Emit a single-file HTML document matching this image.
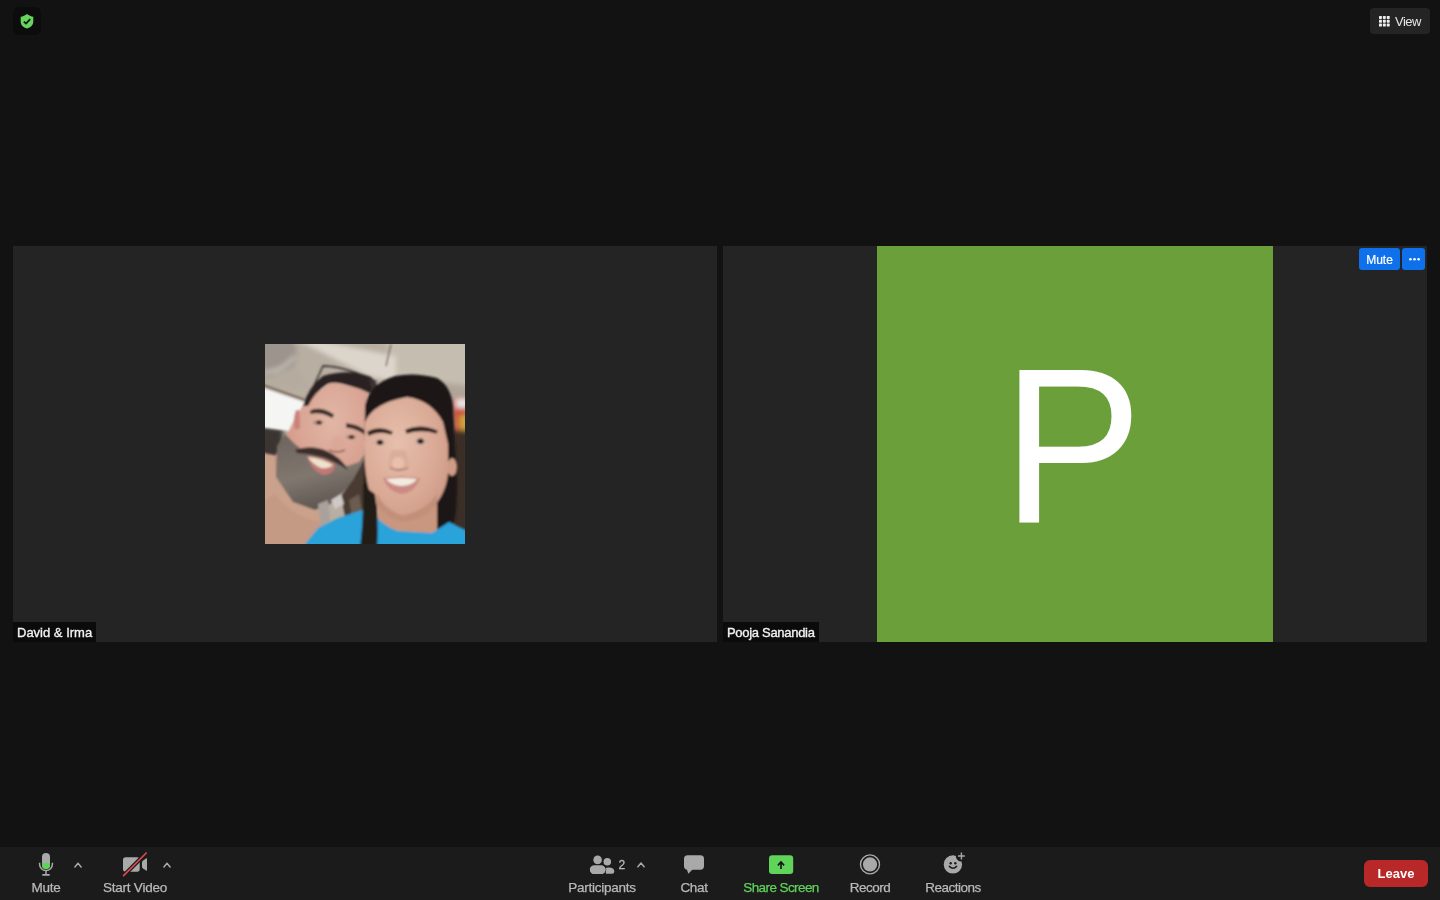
<!DOCTYPE html>
<html><head><meta charset="utf-8">
<style>
*{margin:0;padding:0;box-sizing:border-box}
html,body{width:1440px;height:900px;overflow:hidden;background:#121212;font-family:"Liberation Sans",sans-serif}
.abs{position:absolute}
#shield{left:13px;top:7px;width:28px;height:28px;border-radius:6px;background:#0b0c0b}
#view{left:1370px;top:8px;width:60px;height:26px;border-radius:4px;background:#242424;color:#e6e6e6;font-size:13px}
.tile{top:246px;width:704px;height:396px;background:#242424}
#t1{left:13px}
#t2{left:723px}
.lbl{position:absolute;left:0;bottom:0;height:20px;background:#0b0b0b;font-size:13px;white-space:nowrap}
.lbl span{position:absolute;left:4px;top:3px;line-height:16px;color:#f2f2f2;-webkit-text-stroke:0.35px #f2f2f2;will-change:transform}
#photo{left:252px;top:98px;width:200px;height:200px;overflow:hidden}
#avatar{left:154px;top:0;width:396px;height:396px;background:#6a9f3a;color:#fff;font-size:221px;line-height:396px;text-align:center}
#avatar span{display:inline-block;transform:translate(-2.5px,1.5px) scaleX(0.95)}
.bbtn{position:absolute;top:2px;height:22px;border-radius:3px;background:#0e71eb;color:#fff;font-size:12px}
#toolbar{left:0;top:847px;width:1440px;height:53px;background:#1b1b1b}
.tl{position:absolute;top:32.6px;width:120px;text-align:center;font-size:13.5px;will-change:transform;color:#b9b9b9;-webkit-text-stroke:0.25px currentColor;white-space:nowrap;line-height:16px}
#leave{left:1364px;top:13px;width:64px;height:27px;border-radius:6px;background:#b82828;color:#fff;font-weight:bold;font-size:13px;line-height:28px;text-align:center;will-change:transform}
</style></head><body>

<div id="shield" class="abs">
<svg width="28" height="28" viewBox="0 0 28 28" style="position:absolute;left:0;top:0">
<path d="M14 7 C12 8.6 10 9.4 7.7 9.8 L7.7 14.5 C7.7 18.2 10.3 20.5 14 21.4 C17.7 20.5 20.3 18.2 20.3 14.5 L20.3 9.8 C18 9.4 16 8.6 14 7 Z" fill="#64d65c"/>
<path d="M10.8 14.6 L13 16.6 L17.2 12.2" fill="none" stroke="#0b0c0b" stroke-width="1.7"/>
</svg>
</div>

<div id="view" class="abs">
<svg width="12" height="11" viewBox="0 0 12 11" style="position:absolute;left:8.5px;top:8.3px">
<g fill="#f0f0f0"><rect x="0.0" y="0.0" width="2.9" height="2.9" rx="0.6"/><rect x="3.9" y="0.0" width="2.9" height="2.9" rx="0.6"/><rect x="7.8" y="0.0" width="2.9" height="2.9" rx="0.6"/><rect x="0.0" y="3.8" width="2.9" height="2.9" rx="0.6"/><rect x="3.9" y="3.8" width="2.9" height="2.9" rx="0.6"/><rect x="7.8" y="3.8" width="2.9" height="2.9" rx="0.6"/><rect x="0.0" y="7.6" width="2.9" height="2.9" rx="0.6"/><rect x="3.9" y="7.6" width="2.9" height="2.9" rx="0.6"/><rect x="7.8" y="7.6" width="2.9" height="2.9" rx="0.6"/></g>
</svg>
<span style="position:absolute;left:25px;top:6px;line-height:16px;letter-spacing:-0.5px;will-change:transform">View</span>
</div>

<div id="t1" class="abs tile">
  <div id="photo" class="abs">
<svg width="200" height="200" viewBox="0 0 200 200" style="position:absolute;left:0;top:0">
<defs>
<filter id="bl" x="-10%" y="-10%" width="120%" height="120%"><feGaussianBlur stdDeviation="1.1"/></filter>
<filter id="bl2" x="-20%" y="-20%" width="140%" height="140%"><feGaussianBlur stdDeviation="2.5"/></filter>
<filter id="bl3" x="-20%" y="-20%" width="140%" height="140%"><feGaussianBlur stdDeviation="4"/></filter>
<radialGradient id="mface" cx="0.62" cy="0.3" r="0.75"><stop offset="0" stop-color="#e2b6a6"/><stop offset="0.55" stop-color="#d8a291"/><stop offset="1" stop-color="#c98a80"/></radialGradient>
<radialGradient id="wface" cx="0.4" cy="0.38" r="0.75"><stop offset="0" stop-color="#e6bfac"/><stop offset="0.65" stop-color="#d9a894"/><stop offset="1" stop-color="#c99682"/></radialGradient>
<linearGradient id="beard" x1="0" y1="0" x2="0.3" y2="1"><stop offset="0" stop-color="#6e635e"/><stop offset="0.6" stop-color="#80776f"/><stop offset="1" stop-color="#615852"/></linearGradient>
<clipPath id="pc"><rect width="200" height="200"/></clipPath>
</defs>
<g clip-path="url(#pc)">
<rect width="200" height="200" fill="#b8aea2"/>
<g filter="url(#bl2)">
<!-- fan -->
<circle cx="8" cy="10" r="24" fill="#9d958d"/>
<path d="M-5 28 Q15 30 30 12" stroke="#d8d2ca" stroke-width="2" fill="none"/>
<path d="M-5 36 L30 22 L46 45 L-5 42 Z" fill="#b5ab9f"/>
<path d="M120 -5 L205 -5 L205 55 L130 36 Z" fill="#c6bdb1"/>
<path d="M150 35 L205 42 L205 72 L180 62 Z" fill="#afa599"/>
<path d="M30 -5 L48 -5 L131 12 L131 38 L105 33 Z" fill="#dcd5cb"/>
<path d="M-5 82 L18 84 L18 114 L-5 114 Z" fill="#3a3632"/>

<path d="M186 55 L205 52 L205 86 L189 86 Z" fill="#c9503a"/>
<path d="M190 55 L205 54 L205 64 L191 64 Z" fill="#e8e4e4"/>
<path d="M194 72 L205 70 L205 94 L195 94 Z" fill="#cfa23e"/>
<path d="M186 86 L205 86 L205 205 L186 205 Z" fill="#3b2f27"/>
</g>
<g filter="url(#bl)">
<path d="M-5 43 L39 58 L38 89 L-5 83 Z" fill="#f5f5f4"/>
<path d="M-5 40 L40 56" stroke="#7a695c" stroke-width="2.2"/>
<path d="M126 0 L121 22" stroke="#4a3f38" stroke-width="0.9"/>
<!-- man shoulder/neck -->
<path d="M-5 108 L12 112 L22 140 L40 160 L56 168 L66 205 L-5 205 Z" fill="#caa18b"/>
<path d="M10 150 Q30 175 56 178 L60 205 L-5 205 L-5 160 Z" fill="#c49a85"/>
<!-- man face -->
<path d="M40 57 L28 78 L17 100 L10 112 L11 133 L28 158 L50 165 L67 158 L83 142 L98 128 L102 100 L102 46 L67 38 L44 54 Z" fill="url(#mface)"/>
<path d="M31 66 Q27 76 30 86 L35 84 Q35 74 34 66 Z" fill="#c9837b"/>
<!-- beard -->
<path d="M20 90 L12 102 L11 133 L28 158 L50 166 L67 159 L83 143 L99 128 L101 108 L94 118 L82 122 L70 117 L55 112 L40 108 L30 100 Z" fill="url(#beard)"/>
<!-- woman hair strands between -->
<path d="M101 112 L108 130 L110 172 L96 180 L80 172 L76 152 L88 136 Z" fill="#4a3a30"/>
<path d="M84 156 L94 150 L98 172 L88 178 Z" fill="#6b5b50"/>
<!-- strap -->
<path d="M53 160 L63 156 L66 185 L57 190 Z" fill="#a9a29c"/>
<path d="M66 156 L76 150 L79 160 L70 165 Z" fill="#cfc9c6"/>
<!-- mouth -->
<path d="M42 112 Q56 112 70 120 Q70 130 58 131 Q46 126 42 112 Z" fill="#c47874"/>
<path d="M43 113 Q56 114 68 121 Q63 125 56 124 Q47 120 43 113 Z" fill="#ece3cc"/>
<path d="M30 106 Q46 100 62 107 Q76 113 83 126 Q72 119 60 114 Q46 110 32 109 Z" fill="#3a2e2a"/>
<!-- nose -->
<ellipse cx="73" cy="99" rx="7" ry="7" fill="#dba595" opacity="0.6"/>
<path d="M64 106 Q72 110 80 106" stroke="#8c5a50" stroke-width="1.5" fill="none"/>
<!-- man hair -->
<path d="M38 62 Q44 42 58 32 Q84 24 106 33 L113 42 L104 49 Q94 44 82 41 Q70 37 62 40 Q50 48 43 62 Z" fill="#2b2421"/>
<!-- glasses -->
<path d="M43 55 L58 22 Q80 22 112 38" stroke="#2a2624" stroke-width="1.3" fill="none"/>
<path d="M104 35 Q112 38 116 48 L108 50 Z" fill="#3a3330"/>
<!-- man brows/eyes -->
<path d="M46 67 Q56 63 68 71 L67 73 Q56 67 46 69 Z" stroke="#3a2d28" stroke-width="1.6" fill="#3a2d28"/>
<path d="M82 80 Q93 81 101 88 L100 90 Q92 84 82 83 Z" stroke="#3a2d28" stroke-width="1.6" fill="#3a2d28"/>
<ellipse cx="53" cy="78.5" rx="5.5" ry="2.3" fill="#b89488"/><ellipse cx="54" cy="78.5" rx="2.8" ry="2" fill="#3a2822"/>
<ellipse cx="86" cy="93" rx="5.5" ry="2.3" fill="#b89488"/><ellipse cx="86.5" cy="93" rx="2.8" ry="2" fill="#3a2822"/>
<!-- woman hair -->
<path d="M100 62 Q104 40 130 32 Q150 28 172 34 Q186 42 188 62 L192 130 Q193 175 186 192 L168 192 L168 140 L112 140 L112 205 L100 205 L99 140 Z" fill="#1e1816"/>
<!-- woman face -->
<path d="M100 78 Q108 59 142 53 Q166 56 178 78 L183 100 L183 130 Q180 155 162 168 Q146 176 131 174 Q112 168 105 150 Q99 130 99 100 Z" fill="url(#wface)"/>
<ellipse cx="187" cy="123" rx="5" ry="9" fill="#cf9c86"/>
<!-- woman brows/eyes -->
<path d="M103 88 Q114 82 127 88 L126 90 Q114 86 104 91 Z" stroke="#2e221e" stroke-width="1.3" fill="#2e221e"/>
<path d="M141 86 Q156 80 172 87 L171 89 Q156 84 142 89 Z" stroke="#2e221e" stroke-width="1.3" fill="#2e221e"/>
<ellipse cx="114.5" cy="98.5" rx="6.5" ry="2.8" fill="#c9b0a6"/><ellipse cx="115" cy="98.3" rx="3.2" ry="2.6" fill="#2e1e1a"/>
<ellipse cx="156" cy="97.4" rx="6.5" ry="2.8" fill="#c9b0a6"/><ellipse cx="155.5" cy="97.2" rx="3.2" ry="2.6" fill="#2e1e1a"/>
<path d="M126 106 Q122 120 124 124 Q134 128 144 124 Q146 118 140 106 Z" fill="#dcae9a"/>
<ellipse cx="133" cy="119" rx="6" ry="6" fill="#e8c0ad"/>
<path d="M125 124 Q134 128 143 124" stroke="#9a6a5c" stroke-width="1.3" fill="none"/>
<!-- woman mouth -->
<path d="M118 134 Q137 131 155 134 Q150 149 136 150 Q122 147 118 134 Z" fill="#cc8a84"/>
<path d="M121 135 Q137 133 152 135 Q147 142 136 142 Q126 141 121 135 Z" fill="#f2ebe0"/>
<!-- neck -->
<path d="M112 150 Q120 166 137 171 Q160 168 172 150 L172 192 L114 192 Z" fill="#c9977f"/>
<path d="M112 150 Q120 166 137 172 Q160 168 172 150 L172 160 Q160 176 137 178 Q120 174 112 160 Z" fill="#c28f7a"/>
<!-- blue shirt -->
<path d="M36 205 L53 184 Q75 172 98 166 L108 169 Q118 182 133 187 L167 189 L184 178 L205 188 L205 205 Z" fill="#29a2da"/>
<path d="M98 140 Q104 146 110 150 Q114 175 112 205 L95 205 Q99 170 98 140 Z" fill="#221a17"/>
</g>
</g>
</svg>
  </div>
  <div class="lbl" style="width:83px"><span>David &amp; Irma</span></div>
</div>

<div id="t2" class="abs tile">
  <div id="avatar" class="abs"><span>P</span></div>
  <div class="bbtn" style="left:636px;width:41px"><span style="position:absolute;left:0;width:41px;text-align:center;top:3.5px;line-height:16px;-webkit-text-stroke:0.2px #fff;will-change:transform">Mute</span></div>
  <div class="bbtn" style="left:679px;width:23px"><svg width="23" height="22" style="position:absolute;left:0;top:0"><circle cx="8.4" cy="11.3" r="1.3" fill="#fff"/><circle cx="12.5" cy="11.3" r="1.3" fill="#fff"/><circle cx="16.6" cy="11.3" r="1.3" fill="#fff"/></svg></div>
  <div class="lbl" style="width:96px"><span style="letter-spacing:-0.3px">Pooja Sanandia</span></div>
</div>

<div id="toolbar" class="abs">
<svg class="abs" style="left:0;top:0" width="1440" height="53" viewBox="0 847 1440 53">
<defs>
<clipPath id="micclip"><rect x="42" y="853" width="8" height="16" rx="4"/></clipPath>
<mask id="facemask"><rect x="930" y="847" width="50" height="40" fill="#fff"/><circle cx="961.4" cy="856" r="5.6" fill="#000"/></mask>
</defs>
<g fill="#a9a9a9">
<!-- mic -->
<rect x="42" y="853" width="8" height="16" rx="4"/>
<rect x="40" y="863" width="12" height="8" fill="#5dd35a" clip-path="url(#micclip)"/>
<path d="M39.6 862.8 L39.6 864.2 A6.4 6.4 0 0 0 52.4 864.2 L52.4 862.8" fill="none" stroke="#a9a9a9" stroke-width="1.5"/>
<rect x="45.25" y="870.5" width="1.5" height="4"/>
<rect x="42.2" y="874" width="7.6" height="1.7" rx="0.4"/>
</g>
<g fill="none" stroke="#a9a9a9" stroke-width="1.5" stroke-linecap="round" stroke-linejoin="round">
<path d="M74.9 867 L78 863.2 L81.1 867"/>
<path d="M163.9 867 L167 863.2 L170.1 867"/>
<path d="M637.9 866.8 L641 863 L644.1 866.8"/>
</g>
<!-- video -->
<g fill="#a9a9a9">
<rect x="123" y="857.2" width="16.7" height="14.5" rx="2.6"/>
<path d="M142 862.2 Q142 861.4 142.8 860.8 L146 858.4 Q147 857.8 147 859 L147 870 Q147 871.2 146 870.6 L142.8 868.2 Q142 867.6 142 866.8 Z"/>
</g>
<path d="M123.6 875.6 L146.2 853" stroke="#1b1b1b" stroke-width="4" stroke-linecap="round"/>
<path d="M123.6 875.6 L146.2 853" stroke="#d9494c" stroke-width="1.7" stroke-linecap="round"/>
<!-- participants -->
<g fill="#a9a9a9">
<circle cx="607.3" cy="861.7" r="3.8"/>
<path d="M606 873.8 L612 873.8 Q614.3 873.8 614.3 871.8 Q614.3 867.6 608.8 867.6 Q606 867.6 605 868.2 Z"/>
<circle cx="597.6" cy="859.9" r="4.3"/>
</g>
<rect x="589.9" y="865.5" width="15.6" height="8.4" rx="4.2" fill="#a9a9a9" stroke="#1b1b1b" stroke-width="1.4" paint-order="stroke"/>
<rect x="589.9" y="865.5" width="15.6" height="8.4" rx="4.2" fill="#a9a9a9"/>
<text x="618.4" y="869" font-family="Liberation Sans" font-size="12" fill="#b8b8b8" stroke="#b8b8b8" stroke-width="0.3" style="will-change:transform">2</text>
<!-- chat -->
<g fill="#a9a9a9">
<rect x="684" y="855.2" width="20" height="14.5" rx="3.6"/>
<path d="M686.6 868.5 L688.3 873.8 L693.5 868.5 Z"/>
</g>
<!-- share -->
<rect x="769" y="855.2" width="24.2" height="18.7" rx="3.2" fill="#5fd35a"/>
<path d="M781 869 L781 862.6" stroke="#111" stroke-width="1.6"/>
<path d="M777.9 865.4 L781 862 L784.1 865.4" fill="none" stroke="#111" stroke-width="1.6"/>
<!-- record -->
<circle cx="870" cy="864.4" r="9.5" fill="none" stroke="#a9a9a9" stroke-width="1.4"/>
<circle cx="870" cy="864.4" r="7.1" fill="#a9a9a9"/>
<!-- reactions -->
<g mask="url(#facemask)">
<circle cx="952.9" cy="864.4" r="9.2" fill="#a9a9a9"/>
</g>
<circle cx="950.7" cy="863.2" r="1.2" fill="#1b1b1b"/>
<circle cx="955.3" cy="863.2" r="1.2" fill="#1b1b1b"/>
<path d="M949.4 866.4 Q953 870 956.6 866.4" fill="none" stroke="#1b1b1b" stroke-width="1.5" stroke-linecap="round"/>
<path d="M961.4 852.6 L961.4 859.4 M958 856 L964.8 856" stroke="#a9a9a9" stroke-width="1.4"/>
</svg>
  <div class="tl" style="left:-14px;letter-spacing:-0.25px">Mute</div>
  <div class="tl" style="left:74.8px;letter-spacing:-0.23px">Start Video</div>
  <div class="tl" style="left:542px;letter-spacing:-0.25px">Participants</div>
  <div class="tl" style="left:633.75px;letter-spacing:-0.38px">Chat</div>
  <div class="tl" style="left:721px;color:#5fd35a;letter-spacing:-0.58px">Share Screen</div>
  <div class="tl" style="left:809.7px;letter-spacing:-0.48px">Record</div>
  <div class="tl" style="left:892.9px;letter-spacing:-0.48px">Reactions</div>
  <div id="leave" class="abs">Leave</div>
</div>

</body></html>
